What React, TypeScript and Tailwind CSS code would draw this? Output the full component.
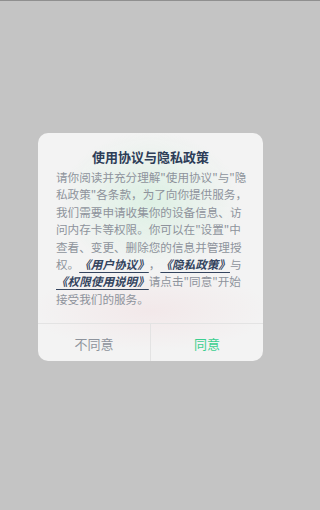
import React from "react";

const Link = ({ children }: { children: React.ReactNode }) => (
  <span className="font-bold italic text-[#34445e] underline decoration-[#34445e] decoration-1 underline-offset-[3px]">
    {children}
  </span>
);

export default function App() {
  const font = { fontFamily: '"Noto Sans CJK SC", "Noto Sans", sans-serif' };
  return (
    <div
      className="w-full h-[510px] overflow-hidden bg-[#c4c4c4] border-t border-[#8f8f8f] flex flex-col pt-[132px]"
      style={font}
    >
      <div className="ml-[38px] w-[225px] rounded-[10px] overflow-hidden bg-[#f3f3f3] bg-[radial-gradient(ellipse_90px_70px_at_50%_30%,rgba(180,235,200,0.35),transparent),radial-gradient(ellipse_120px_40px_at_50%_78%,rgba(240,200,205,0.25),transparent)] flex flex-col">
        <div className="pt-[14px] px-[18px] pb-[15px] flex flex-col">
          <div className="text-center text-[13px] leading-[20px] font-bold text-[#2d3d57]">
            使用协议与隐私政策
          </div>
          <div className="mt-[2px] text-[11.6px] leading-[17.4px] text-[#8e939c] whitespace-nowrap flex flex-col">
            <span>请你阅读并充分理解"使用协议"与"隐</span>
            <span>私政策"各条款，为了向你提供服务，</span>
            <span>我们需要申请收集你的设备信息、访</span>
            <span>问内存卡等权限。你可以在"设置"中</span>
            <span>查看、变更、删除您的信息并管理授</span>
            <span>
              权。<Link>《用户协议》</Link>，<Link>《隐私政策》</Link>与
            </span>
            <span>
              <Link>《权限使用说明》</Link>请点击"同意"开始
            </span>
            <span>接受我们的服务。</span>
          </div>
        </div>
        <div className="flex h-[38px] border-t border-[#e3e3e3]">
          <div className="flex-1 flex items-center justify-center pt-[2px] text-[13px] text-[#8e939c]">
            不同意
          </div>
          <div className="w-px bg-[#e3e3e3]" />
          <div className="flex-1 flex items-center justify-center pt-[2px] text-[13px] text-[#3ccf90]">
            同意
          </div>
        </div>
      </div>
    </div>
  );
}
